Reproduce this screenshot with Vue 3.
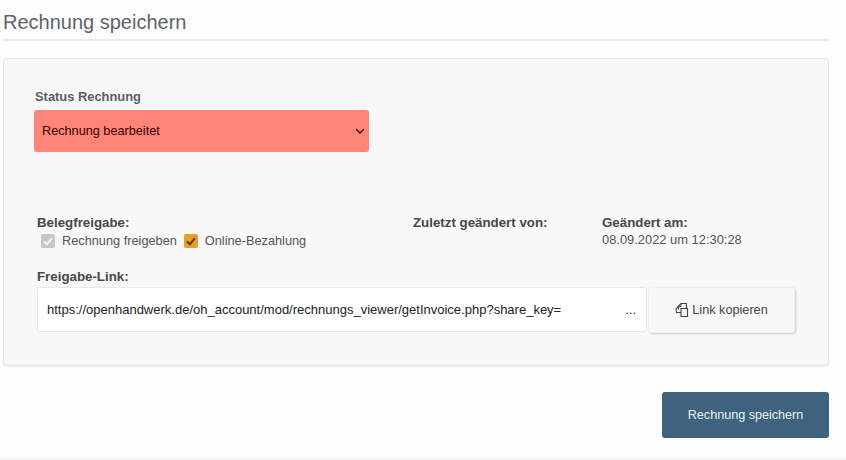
<template>
  <div class="page">
    <h2 class="title">Rechnung speichern</h2>

    <div class="card">
      <div class="status">
        <label class="status-label">Status Rechnung</label>
        <div class="select-wrap">
          <select class="status-select">
            <option>Rechnung bearbeitet</option>
          </select>
          <svg class="chevron" viewBox="0 0 10 6" width="10" height="6"><path d="M1 1l4 4 4-4" fill="none" stroke="#300" stroke-width="1.300" /></svg>
        </div>
      </div>

      <div class="info-row">
        <div>
          <div class="info-title">Belegfreigabe:</div>
          <div class="checks">
            <span class="check">
              <span class="box disabled">
                <svg viewBox="0 0 14 14" width="14" height="14"><path d="M3 7.400l2.800 2.800L11 4.200" fill="none" stroke="#f4f4f4" stroke-width="2" /></svg>
              </span>
              Rechnung freigeben
            </span>
            <span class="check">
              <span class="box active">
                <svg viewBox="0 0 14 14" width="14" height="14"><path d="M3 7.400l2.800 2.800L11 4.200" fill="none" stroke="#6b3208" stroke-width="2" /></svg>
              </span>
              Online-Bezahlung
            </span>
          </div>
        </div>
        <div>
          <div class="info-title">Zuletzt geändert von:</div>
        </div>
        <div>
          <div class="info-title">Geändert am:</div>
          <div class="info-value">08.09.2022 um 12:30:28</div>
        </div>
      </div>

      <div class="link-block">
        <div class="info-title">Freigabe-Link:</div>
        <div class="link-row">
          <div class="link-input">
            <span>https://openhandwerk.de/oh_account/mod/rechnungs_viewer/getInvoice.php?share_key=</span>
            <span>...</span>
          </div>
          <button class="copy-btn">
            <svg viewBox="0 0 14 14" width="14" height="14">
              <path d="M6 5.500h6.500v8H6z" fill="none" stroke="#444" stroke-width="1.100" />
              <path d="M6 9.500H1.500L1 6l3-3.500M3.500 6.500V3L6 .5h5.500v5" fill="none" stroke="#444" stroke-width="1.100" />
              <path d="M6 1v2.500H3.500" fill="none" stroke="#444" stroke-width="1" />
            </svg>
            Link kopieren
          </button>
        </div>
      </div>
    </div>

    <div class="actions">
      <button class="save-btn">Rechnung speichern</button>
    </div>
    <div class="footer-line"></div>
  </div>
</template>

<script setup>
</script>

<style>
html, body {
  margin: 0;
  background: #fdfdfd;
}
</style>

<style scoped>
.page {
  width: 846px;
  height: 460px;
  overflow: hidden;
  font-family: "Liberation Sans", Arial, sans-serif;
  color: #444;
  box-sizing: border-box;
}

.title {
  margin: 0 17px 17px 3px;
  height: 39px;
  line-height: 45px;
  font-size: 20px;
  font-weight: 400;
  color: #5f6469;
  border-bottom: 2px solid #e9eef0;
  box-sizing: content-box;
}

.card {
  margin: 0 17px 0 3px;
  height: 308px;
  box-sizing: border-box;
  background: #f8f8f8;
  border: 1px solid #e6e6e6;
  border-radius: 4px;
  box-shadow: 0 1px 2px rgba(0,0,0,0.06);
  padding: 30px 33px 0 30px;
}

.status-label {
  display: block;
  font-size: 12.900px;
  font-weight: 700;
  line-height: 16px;
  color: #5a5f64;
  margin-bottom: 5px;
  padding-left: 1px;
}

.select-wrap {
  position: relative;
  width: 335px;
}

.status-select {
  display: block;
  width: 335px;
  height: 42px;
  padding: 0 8px;
  border: none;
  border-radius: 3px;
  background: #ff8578;
  color: #300;
  font-family: "Liberation Sans", Arial, sans-serif;
  font-size: 12.700px;
  appearance: none;
}

.chevron {
  position: absolute;
  right: 4px;
  top: 18px;
}

.info-row {
  display: grid;
  grid-template-columns: 376px 189px auto;
  margin-top: 63px;
  padding-left: 3px;
}

.info-title {
  font-size: 13.300px;
  font-weight: 700;
  line-height: 16px;
  color: #484848;
}

.info-value {
  font-size: 12.900px;
  line-height: 17px;
  color: #555;
}

.checks {
  display: flex;
  gap: 7px;
  margin-top: 2px;
}

.check {
  display: flex;
  align-items: center;
  gap: 7px;
  font-size: 12.750px;
  line-height: 16px;
  color: #555;
}

.box {
  width: 14px;
  height: 14px;
  border-radius: 2px;
  display: block;
  margin-left: 4px;
}

.box svg {
  display: block;
}

.box.disabled {
  background: #c6c6c8;
}

.box.active {
  background: #e5a128;
  margin-left: 0;
}

.link-block {
  margin-top: 20px;
  padding-left: 3px;
}

.link-row {
  display: flex;
  align-items: flex-start;
  margin-top: 2px;
}

.link-input {
  width: 610px;
  height: 45px;
  box-sizing: border-box;
  display: flex;
  justify-content: space-between;
  align-items: center;
  padding: 0 10px 0 9px;
  background: #fff;
  border: 1px solid #e8e8e8;
  border-radius: 3px;
  font-size: 13px;
  color: #222;
}

.copy-btn {
  width: 147px;
  height: 46px;
  margin-left: 1px;
  display: flex;
  align-items: center;
  justify-content: center;
  gap: 3px;
  background: #f8f8f8;
  border: 1px solid #efefef;
  border-radius: 3px;
  box-shadow: 1px 1px 2px rgba(0,0,0,0.18);
  font-family: "Liberation Sans", Arial, sans-serif;
  font-size: 12.700px;
  color: #444;
}

.actions {
  display: flex;
  justify-content: flex-end;
  margin: 26px 17px 0 0;
}

.save-btn {
  width: 167px;
  height: 46px;
  background: #3f637c;
  border: none;
  border-radius: 3px;
  color: #e8f0f4;
  font-family: "Liberation Sans", Arial, sans-serif;
  font-size: 12.600px;
}

.footer-line {
  margin-top: 20px;
  height: 2px;
  background: #eef0f1;
}
</style>
